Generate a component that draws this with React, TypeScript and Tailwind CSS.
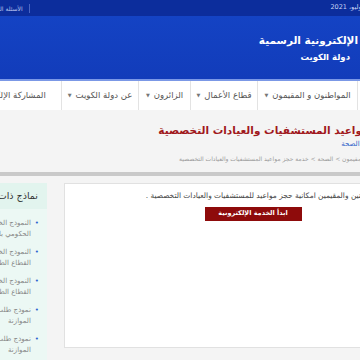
import React from "react";

const navItems = [
  { label: "الرئيسية", w: "w-[75px]", caret: false },
  { label: "المواطنون و المقيمون", w: "w-[100px]", caret: true },
  { label: "قطاع الأعمال", w: "w-[67px]", caret: true },
  { label: "الزائرون", w: "w-[52px]", caret: true },
  { label: "عن دولة الكويت", w: "w-[77px]", caret: true },
  { label: "المشاركة الإلكترونية", w: "w-[110px]", caret: true },
];

const forms = [
  ["النموذج الخاص بطلب العلاج", "الحكومي بالخارج"],
  ["النموذج الخاص بالعلاج في", "القطاع الطبي الخاص"],
  ["النموذج الخاص بالتسجيل في", "القطاع الطبي الأهلي"],
  ["نموذج طلب اعتماد بند", "الموازنة"],
  ["نموذج طلب تعديل بند", "الموازنة"],
];

export default function App() {
  return (
    <div
      className="w-[360px] h-[360px] overflow-hidden bg-[#f4f4f4]"
      style={{ fontFamily: '"DejaVu Sans", "Noto Sans", sans-serif' }}
    >
      <div dir="rtl" className="w-[560px] -ml-[80px]">
        {/* top strip */}
        <div className="h-[16px] bg-[#0c2d9c] flex items-center justify-between pr-[82px] pl-[62px]">
          <span className="text-[6.5px] text-[#c9d4f5]">الخميس 15 يوليو، 2021</span>
          <div className="flex items-center gap-[6px]">
            <span className="h-[9px] w-px bg-[#4a66c4]" />
            <span className="text-[6px] text-[#b9c6ee]">الأسئلة المتداولة</span>
          </div>
        </div>

        {/* header */}
        <div className="h-[63px] bg-gradient-to-b from-[#1443c4] to-[#123cba] pt-[16px] flex flex-col items-start">
          <div className="text-[10.5px] font-bold text-white leading-[16px] mr-[86px]">البوابة الإلكترونية الرسمية</div>
          <div className="text-[8.5px] font-bold text-white leading-[12px] mr-[130px] mt-[3px] tracking-[0.5px]">دولة الكويت</div>
        </div>
        <div className="h-[2px] bg-[#7b98e6]" />

        {/* nav */}
        <div className="h-[29px] bg-white flex pr-[48px]">
          {navItems.map((n) => (
            <div
              key={n.label}
              className={`${n.w} shrink-0 h-full border-l border-[#e3e3e3] flex items-center justify-center gap-[4px] text-[8.5px] text-[#555]`}
            >
              <span>{n.label}</span>
              {n.caret && <span className="text-[5px] text-[#777]">▼</span>}
            </div>
          ))}
        </div>

        {/* title area */}
        <div className="pt-[11px]">
          <h1 className="text-[10.5px] font-bold text-[#a0181c] leading-[18px] mr-[56px]">
            خدمة حجز مواعيد المستشفيات والعيادات التخصصية
          </h1>
          <div className="text-[7px] leading-[10px] mr-[80px] text-[#777]">
            الجهة : <span className="text-[#2b5fc9]">وزارة الصحة</span>
          </div>
          <div className="text-[6px] leading-[10px] mt-[5px] mr-[55px] text-[#999]">
            الرئيسية &gt; المواطنون والمقيمون &gt; الصحة &gt; خدمة حجز مواعيد المستشفيات والعيادات التخصصية
          </div>
        </div>
        <div className="h-[4px] bg-[#c9c9c9] mt-[8px]" />

        {/* content */}
        <div className="flex items-start gap-[17px] pr-[48px] pt-[7px]">
          <div className="w-[368px] shrink-0 h-[165px] bg-white border border-[#e1e1e1] pt-[6px] pr-[12px] pl-[12px]">
            <p className="text-[7.45px] leading-[12px] text-[#444] whitespace-nowrap">
              تتيح الخدمة للمواطنين والمقيمين امكانية حجز مواعيد للمستشفيات والعيادات التخصصية .
            </p>
            <div className="mt-[5px] flex justify-center pl-[10px]">
              <button className="w-[97px] h-[14px] bg-[#8e0b0b] text-white text-[6.5px] font-bold flex items-center justify-center">
                ابدأ الخدمة الإلكترونية
              </button>
            </div>
          </div>

          <div className="w-[119px] shrink-0 bg-[#ecf8f4] min-h-[200px]">
            <div className="h-[26px] bg-[#e2f4ee] flex items-center pr-[9px] text-[9.5px] text-[#333]">
              نماذج ذات صلة
            </div>
            <ul className="pr-[8px] pt-[9px]">
              {forms.map((f, i) => (
                <li key={i} className="flex items-start gap-[4px] mb-[7px]">
                  <span className="text-[#2f62d0] text-[7px] leading-[11px]">•</span>
                  <span className="text-[7px] leading-[11px] text-[#888]">
                    {f[0]}
                    <br />
                    {f[1]}
                  </span>
                </li>
              ))}
            </ul>
          </div>
        </div>
      </div>
    </div>
  );
}
